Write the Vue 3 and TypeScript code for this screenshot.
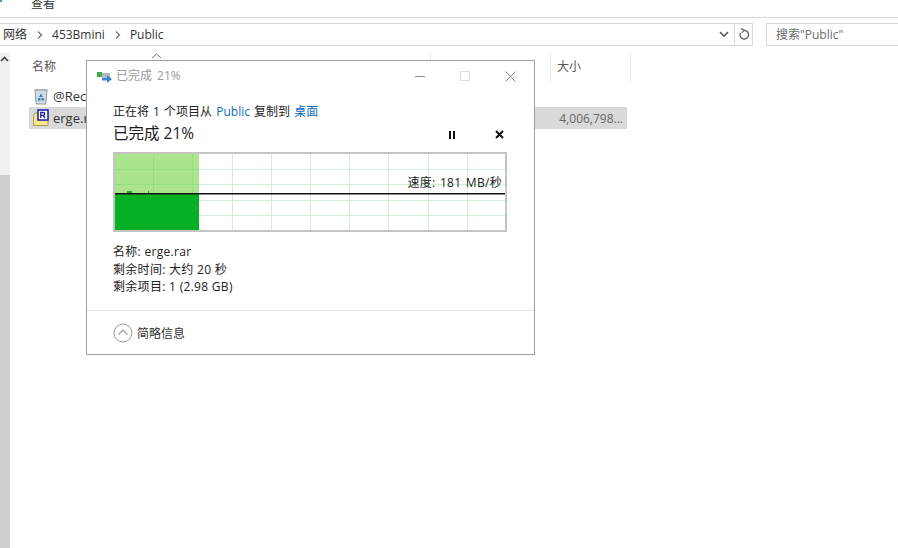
<script setup lang="ts">
const vLines: number[] = [38, 77, 117, 156, 195, 234, 273, 313, 352]
const hLines: number[] = [15, 30, 46, 61]
const infoLines: string[] = ['名称: erge.rar', '剩余时间: 大约 20 秒', '剩余项目: 1 (2.98 GB)']
</script>

<template>
  <div class="page">
    <div class="ribbon"><span class="ribbon-mark"></span><span class="ribbon-tab">查看</span></div>
    <div class="toolbar">
      <div class="address">
        <span class="crumb">网络</span>
        <svg class="chev" width="6" height="8" viewBox="0 0 6 8"><path d="M1 .5 4.500 4 1 7.500" fill="none" stroke="#777" stroke-width="1.400" /></svg>
        <span class="crumb">453Bmini</span>
        <svg class="chev" width="6" height="8" viewBox="0 0 6 8"><path d="M1 .5 4.500 4 1 7.500" fill="none" stroke="#777" stroke-width="1.400" /></svg>
        <span class="crumb">Public</span>
        <span class="spacer"></span>
        <svg class="drop" width="10" height="7" viewBox="0 0 10 7"><path d="M1 1 5 5.200 9 1" fill="none" stroke="#555" stroke-width="1.600" /></svg>
        <span class="refresh">
          <svg width="12" height="13" viewBox="0 0 12 13"><path d="M6.500 2.400A4.300 4.300 0 1 1 2.300 5" fill="none" stroke="#666" stroke-width="1.400" /><path d="M3 .6 6.600 2.400 3.600 4.800" fill="none" stroke="#666" stroke-width="1.200" /></svg>
        </span>
      </div>
      <div class="search">搜索"Public"</div>
    </div>

    <div class="main">
      <div class="scrollbar">
        <svg class="scroll-up" width="9" height="6" viewBox="0 0 9 6"><path d="M1 5 4.500 1.500 8 5" fill="none" stroke="#444" stroke-width="1.600" /></svg>
        <div class="thumb"></div>
      </div>
      <div class="files">
        <div class="col-head">
          <div class="col col-name">
            名称
            <svg class="sort" width="11" height="6" viewBox="0 0 11 6"><path d="M1 5 5.500 1 10 5" fill="none" stroke="#777" stroke-width="1" /></svg>
          </div>
          <div class="col col-mid"></div>
          <div class="col col-size">大小</div>
        </div>
        <div class="row">
          <svg class="file-icon" width="16" height="18" viewBox="0 0 16 18">
            <path d="M2 3h12l-1.200 14H3.200Z" fill="#d4dce2" stroke="#8d99a2" />
            <path d="M1.500 2h13v2h-13Z" fill="#aab5bc" />
            <path d="M8 6.500 10 10H6ZM5.500 11l-1 2.500h3V11ZM10.500 11l1 2.500h-3V11Z" fill="#2f7fc1" />
          </svg>
          <span class="file-name">@Rec</span>
        </div>
        <div class="row selected">
          <svg class="file-icon" width="16" height="18" viewBox="0 0 16 18">
            <path d="M.5 6.500 2 4h5l1 2h7v10.500H.5Z" fill="#f6e48c" stroke="#a89a50" />
            <rect x="5" y="1" width="10" height="10" fill="#fff" stroke="#1a1a9a" stroke-width="1.500" />
            <path d="M7.800 9V3.500h2.500a1.400 1.400 0 0 1 0 2.800H8M10 6.300 12 9" fill="none" stroke="#1a1a9a" stroke-width="1.300" />
          </svg>
          <span class="file-name">erge.r</span>
          <span class="file-size">4,006,798...</span>
        </div>
      </div>
    </div>

    <div class="dialog">
      <div class="title-bar">
        <svg class="title-icon" width="16" height="12" viewBox="0 0 16 12">
          <rect x="0" y="1" width="5" height="5" fill="#3fae49" />
          <rect x="5" y="2" width="8" height="4" fill="#b9b9b9" />
          <path d="M5 6.500h5V4l5 4-5 4V9.500H5Z" fill="#3a86cc" />
        </svg>
        <span class="title-text">已完成 21%</span>
        <span class="spacer"></span>
        <div class="win-controls">
          <svg width="10" height="10" viewBox="0 0 10 10"><path d="M0 5.500h10" stroke="#888" /></svg>
          <svg width="10" height="10" viewBox="0 0 10 10"><rect x=".5" y=".5" width="9" height="9" fill="none" stroke="#ddd" /></svg>
          <svg width="11" height="11" viewBox="0 0 11 11"><path d="M.5.500l10 10M10.500.500l-10 10" stroke="#888" /></svg>
        </div>
      </div>
      <div class="content">
        <div class="copy-line">正在将 1 个项目从 <span class="link">Public</span> 复制到 <span class="link">桌面</span></div>
        <div class="progress-line">
          <span class="progress-text">已完成 21%</span>
          <span class="spacer"></span>
          <svg class="ctrl-pause" width="8" height="8" viewBox="0 0 8 8"><path d="M1 0h2v8H1ZM5 0h2v8H5Z" fill="#111" /></svg>
          <svg class="ctrl-stop" width="9" height="9" viewBox="0 0 9 9"><path d="M1 1l7 7M8 1 1 8" stroke="#111" stroke-width="2" /></svg>
        </div>
        <div class="graph">
          <svg class="graph-svg" width="390" height="76" viewBox="0 0 390 76">
            <rect x="0" y="0" width="84" height="39" fill="#aae58e" />
            <g v-for="x in vLines" :key="x">
              <line :x1="x + 0.5" y1="0" :x2="x + 0.5" y2="76" stroke="#d3edda" />
              <line v-if="x < 84" :x1="x + 0.5" y1="0" :x2="x + 0.5" y2="39" stroke="#95e07e" />
            </g>
            <g v-for="y in hLines" :key="y">
              <line x1="0" :y1="y + 0.5" x2="390" :y2="y + 0.5" stroke="#d3edda" />
              <line v-if="y < 39" x1="0" :y1="y + 0.5" x2="84" :y2="y + 0.5" stroke="#95e07e" />
            </g>
            <rect x="0" y="39" width="84" height="37" fill="#06b025" />
            <rect x="12" y="37" width="5" height="2" fill="#2f9e3a" />
            <rect x="33" y="37" width="1" height="2" fill="#2f9e3a" />
            <rect x="0" y="39" width="391" height="1.500" fill="#111" />
          </svg>
          <span class="speed">速度: 181 MB/秒</span>
        </div>
        <div class="info">
          <div v-for="line in infoLines" :key="line" class="info-line">{{ line }}</div>
        </div>
      </div>
      <div class="footer">
        <svg width="20" height="20" viewBox="0 0 20 20">
          <circle cx="10" cy="10" r="9" fill="none" stroke="#9a9a9a" />
          <path d="M5.500 11.500 10 7l4.500 4.500" fill="none" stroke="#9a9a9a" stroke-width="1.200" />
        </svg>
        <span class="footer-label">简略信息</span>
      </div>
    </div>
  </div>
</template>

<style scoped>
.page {
  position: relative;
  width: 898px;
  height: 548px;
  overflow: hidden;
  background: #fff;
  color: #1a1a1a;
  font-family: "Open Sans", "Noto Sans CJK SC", sans-serif;
  font-size: 12px;
}
.ribbon {
  height: 17px;
  border-bottom: 1px solid #d9d9d9;
  box-sizing: content-box;
  position: relative;
}
.ribbon-mark {
  position: absolute;
  left: 0;
  top: 0;
  width: 2px;
  height: 2px;
  background: #4a90d0;
}
.ribbon-tab {
  position: absolute;
  left: 31px;
  top: -5px;
  line-height: 17px;
  color: #333;
}
.toolbar {
  display: flex;
  margin-top: 5px;
  height: 23px;
}
.address {
  width: 753px;
  display: flex;
  align-items: center;
  box-sizing: border-box;
  border: 1px solid #d9d9d9;
  border-left: 0;
  padding-left: 3px;
  line-height: 20px;
  color: #333;
}
.crumb { white-space: nowrap; }
.chev { margin: 0 9px 0 10px; }
.spacer { flex: 1; }
.drop { margin-right: 3px; }
.refresh {
  width: 17px;
  height: 21px;
  border-left: 1px solid #d9d9d9;
  display: flex;
  align-items: center;
  justify-content: center;
  margin-left: 2px;
}
.search {
  margin-left: 13px;
  flex: 1;
  box-sizing: border-box;
  border: 1px solid #d9d9d9;
  border-right: 0;
  padding-left: 9px;
  line-height: 21px;
  color: #6d6d6d;
}
.main {
  display: flex;
  height: 503px;
}
.scrollbar {
  position: relative;
  width: 10px;
  margin-top: 7px;
  background: #f0f0f0;
}
.scroll-up {
  position: absolute;
  left: 0;
  top: 3px;
}
.thumb {
  position: absolute;
  left: 0;
  right: 0;
  top: 122px;
  bottom: 0;
  background: #cdcdcd;
}
.files {
  flex: 1;
  padding-left: 19px;
  padding-top: 7px;
}
.col-head {
  display: flex;
  height: 28px;
  color: #4c607a;
}
.col {
  box-sizing: border-box;
  border-right: 1px solid #e5e5e5;
  line-height: 27px;
  position: relative;
  padding-left: 3px;
}
.col-name { width: 402px; color: #555; }
.col-mid { width: 120px; }
.col-size { width: 80px; padding-left: 6px; color: #555; }
.sort {
  position: absolute;
  left: 122px;
  top: 0;
}
.row {
  display: flex;
  align-items: center;
  height: 22px;
  width: 598px;
  position: relative;
  top: 4px;
  color: #333;
}
.selected { background: #d9d9d9; }
.file-icon { margin-left: 4px; flex: none; }
.file-name {
  margin-left: 4px;
  font-size: 13px;
}
.file-size {
  position: absolute;
  right: 4px;
  color: #666;
}
.dialog {
  position: absolute;
  left: 86px;
  top: 60px;
  width: 449px;
  height: 295px;
  box-sizing: border-box;
  border: 1px solid #a0a0a0;
  background: #fff;
  display: flex;
  flex-direction: column;
}
.title-bar {
  display: flex;
  align-items: center;
  height: 30px;
  padding-left: 10px;
  flex: none;
}
.title-icon { margin-top: 2px; }
.title-text {
  margin-left: 3px;
  color: #999;
  line-height: 30px;
  word-spacing: 2px;
}
.win-controls {
  display: flex;
  align-items: center;
  gap: 35px;
  padding-right: 18px;
}
.content {
  padding: 11px 26px 0;
  flex: 1;
}
.copy-line {
  line-height: 20px;
  color: #222;
  word-spacing: 1px;
}
.link { color: #0f6cbd; }
.progress-line {
  display: flex;
  align-items: center;
  height: 22px;
}
.progress-text {
  font-size: 15.500px;
  line-height: 22px;
}
.ctrl-pause { margin-right: 39px; margin-top: 3px; }
.ctrl-stop { margin-right: 4px; margin-top: 3px; }
.graph {
  position: relative;
  margin-top: 8px;
  width: 394px;
  height: 80px;
  box-sizing: border-box;
  border: 2px solid #c4c4c4;
}
.graph-svg { display: block; }
.speed {
  position: absolute;
  right: 3px;
  top: 20px;
  line-height: 18px;
  color: #222;
  letter-spacing: .3px;
  word-spacing: 1px;
}
.info {
  margin-top: 11px;
}
.info-line {
  line-height: 17.500px;
  color: #222;
  letter-spacing: .3px;
}
.footer {
  flex: none;
  height: 43px;
  border-top: 1px solid #e4e4e4;
  padding-left: 26px;
  display: flex;
  align-items: center;
}
.footer-label {
  margin-left: 4px;
  color: #333;
}
</style>
